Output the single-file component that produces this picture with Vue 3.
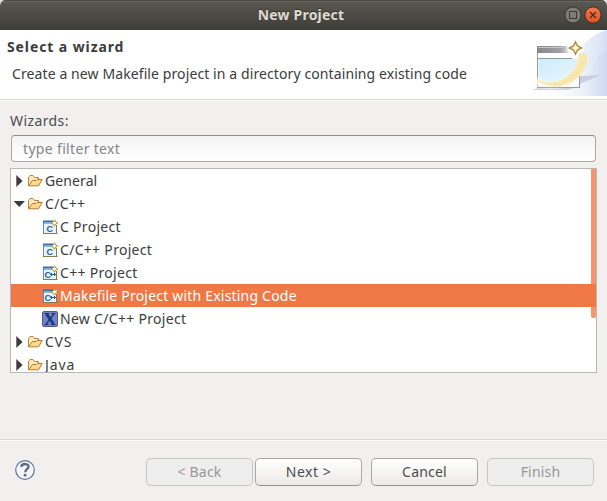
<script setup>
const rows = [
  { label: 'General', kind: 'folder', cls: 't-general' },
  { label: 'C/C++', kind: 'folder', open: true, cls: 't-cc' },
  { label: 'C Project', kind: 'new', glyph: 'C', child: true, cls: 't-c' },
  { label: 'C/C++ Project', kind: 'new', glyph: 'C', child: true, cls: 't-ccp' },
  { label: 'C++ Project', kind: 'new', glyph: 'C++', child: true, cls: 't-cpp' },
  { label: 'Makefile Project with Existing Code', kind: 'new', glyph: 'C++', child: true, selected: true, cls: 't-make' },
  { label: 'New C/C++ Project', kind: 'x', child: true, cls: 't-new' },
  { label: 'CVS', kind: 'folder', cls: 't-cvs' },
  { label: 'Java', kind: 'folder', cls: 't-java' },
]
const buttons = [
  { label: '< Back', disabled: true, cls: 'back' },
  { label: 'Next >', cls: 'next' },
  { label: 'Cancel', cls: 'cancel' },
  { label: 'Finish', disabled: true, cls: 'finish' },
]
</script>

<template>
  <div class="window">
    <div class="titlebar">
      <span class="title">New Project</span>
      <div class="controls">
        <svg width="18" height="18" viewBox="0 0 18 18">
          <circle cx="9" cy="9" r="8.1" fill="#7c7b74" stroke="#35342f" />
          <rect x="5.5" y="5.5" width="7" height="7" fill="none" stroke="#3b3a35" />
        </svg>
        <svg width="18" height="18" viewBox="0 0 18 18">
          <defs>
            <linearGradient id="close" x2="0" y2="1">
              <stop stop-color="#f4794d" /><stop offset="1" stop-color="#e3521f" />
            </linearGradient>
          </defs>
          <circle cx="9" cy="9" r="8.1" fill="url(#close)" stroke="#38332e" />
          <path d="M6 6l6 6M12 6l-6 6" stroke="#4a2a1c" stroke-width="1.3" />
        </svg>
      </div>
    </div>

    <header class="header">
      <div class="header-text">
        <h1>Select a wizard</h1>
        <p>Create a new Makefile project in a directory containing existing code</p>
      </div>
      <svg class="banner" width="75" height="66" viewBox="532 30 75 66">
        <defs>
          <linearGradient id="sweep" x1="0" x2="1">
            <stop stop-color="#f5f7fd" /><stop offset="1" stop-color="#cbd7f0" />
          </linearGradient>
          <linearGradient id="sweep2" x1="0" x2="1">
            <stop stop-color="#ffffff" stop-opacity="0" /><stop offset="1" stop-color="#d5dff4" />
          </linearGradient>
          <linearGradient id="bar" x1="0" x2="1">
            <stop stop-color="#85858a" /><stop offset=".55" stop-color="#a2a2a5" /><stop offset=".85" stop-color="#fff" />
          </linearGradient>
          <linearGradient id="pane" x2="1" y2="1">
            <stop stop-color="#cdecfb" /><stop offset=".6" stop-color="#dff3fe" /><stop offset="1" stop-color="#fff" />
          </linearGradient>
          <filter id="soft"><feGaussianBlur stdDeviation="1.2" /></filter>
          <filter id="haze"><feGaussianBlur stdDeviation=".6" /></filter>
        </defs>
        <path d="M532 96C565 91 568 41 607 30V96Z" fill="url(#sweep2)" />
        <path d="M577 96C596 85 586 59 607 51V96Z" fill="url(#sweep)" opacity=".7" />
        <path d="M580 76L601 75L580 84ZM532 90L541 87H578L567 90Z" fill="#c5c8df" filter="url(#haze)" opacity=".8" />
        <rect x="537.5" y="46.5" width="42" height="41" fill="#fff" stroke="#9799a2" />
        <rect x="537" y="46" width="43" height="7" fill="url(#bar)" />
        <path d="M538 47.5H564" stroke="#c5c5c8" />
        <rect x="538.5" y="58.5" width="40" height="28" fill="url(#pane)" />
        <path d="M538 58.5H572" stroke="#8c98a5" />
        <circle cx="575" cy="48" r="8" fill="#fff" filter="url(#soft)" />
        <path d="M535 80C547 91 580 86 583 57" fill="none" stroke="#fffbea" stroke-width="8" filter="url(#soft)" opacity=".8" />
        <path d="M534 78C543 84 556 84 565 78Q577 70 579 56Q580 52 584 53Q589 55 587 63C580 84 555 95 534 78Z" fill="#f8e8af" filter="url(#haze)" />
        <path d="M555 84Q577 81 583 60" fill="none" stroke="#edd894" stroke-width="1.2" stroke-dasharray="1 3" />
        <path d="M538 87.5H579.5V78" fill="none" stroke="#9799a2" opacity=".8" />
        <path d="M575.5 42L577.5 46L581.5 48L577.5 50L575.5 54L573.5 50L569.5 48L573.5 46Z" fill="#fff9dc" stroke="#b28c3d" stroke-width="1.5" />
      </svg>
    </header>

    <main class="content">
      <label class="wizards">Wizards:</label>
      <div class="filter"><span>type filter text</span></div>
      <div class="tree">
        <div v-for="row in rows" :key="row.label" class="row" :class="{ child: row.child, selected: row.selected }">
          <svg v-if="!row.child" class="arrow" width="13" height="14" viewBox="0 0 13 14">
            <path v-if="row.open" d="M.5 4H12L6.25 10Z" fill="#3c3c3c" />
            <path v-else d="M3.3 1L9.6 7L3.3 13Z" fill="#3c3c3c" />
          </svg>
          <svg v-if="row.kind === 'folder'" class="icon" width="16" height="16" viewBox="0 0 16 16">
            <path d="M1.5 12.5V4.5L3 2.5H6L7.5 4.5H11.5V7.5" fill="#fae9bd" stroke="#c08239" stroke-linejoin="round" />
            <path d="M1.5 12.8L5.5 7.5H9L10 6.5H15.2L11.5 12.8Z" fill="#f8d98e" stroke="#b47a34" stroke-linejoin="round" />
          </svg>
          <svg v-else-if="row.kind === 'new'" class="icon" width="16" height="16" viewBox="0 0 16 16">
            <rect x="1" y="2" width="14" height="13" fill="#e5f3fc" />
            <path d="M1.5 14.5V2" stroke="#5e8db4" />
            <path d="M1 14.5H15.5M14.5 15V6" stroke="#8b7a43" />
            <path d="M1 2.5H11" stroke="#2e71ab" stroke-width="2" />
            <path d="M2 4.5H10" stroke="#8bb6da" />
            <text :x="row.glyph === 'C' ? 4.5 : 2.5" y="12.5" class="glyph">C</text>
            <path v-if="row.glyph === 'C++'" d="M8 9.5H11M9.5 8V11M11 9.5H14M12.5 8V11" stroke="#255d91" />
            <path d="M12.5 .8L13.7 2.9L15.8 4L13.7 5.1L12.5 7.2L11.3 5.1L9.2 4L11.3 2.9Z" fill="#fff4bd" stroke="#b18b2b" />
            <path d="M12.5 2V6M10.5 4H14.5" stroke="#fffbe0" />
          </svg>
          <svg v-else class="icon" width="16" height="16" viewBox="0 0 16 16">
            <rect x=".5" y=".5" width="15" height="15" rx="1.5" fill="#7883bd" stroke="#4d5998" />
            <path d="M2.5 2.5H7M9.5 2.5H13.5M2.5 13.5H6.5M9 13.5H13.5" stroke="#173276" />
            <path d="M4.5 3L11.5 13" stroke="#173a87" stroke-width="3" />
            <path d="M11.8 3L4.2 13" stroke="#173a87" stroke-width="1.5" />
          </svg>
          <span class="label" :class="row.cls">{{ row.label }}</span>
        </div>
        <div class="scroll"></div>
      </div>
    </main>

    <footer class="footer">
      <svg class="help" width="20" height="20" viewBox="0 0 20 20">
        <circle cx="10" cy="10" r="9.3" fill="#f4f5f8" stroke="#657693" stroke-width="1.2" />
        <path d="M6.3 6.8C6.8 3 13.8 3.2 13.5 6.8C13.3 9.3 10.3 9.2 10.2 12.3" fill="none" stroke="#56678b" stroke-width="2.3" />
        <circle cx="10.1" cy="15.2" r="1.4" fill="#56678b" />
      </svg>
      <button v-for="b in buttons" :key="b.label" :class="b.cls" :disabled="b.disabled"><span>{{ b.label }}</span></button>
    </footer>
  </div>
</template>

<style>
body { margin: 0; background: #dfe0e2; }
</style>

<style scoped>
.window {
  width: 607px; height: 501px; overflow: hidden; box-sizing: border-box;
  display: flex; flex-direction: column; background: #f1f0ee; border-radius: 6px 6px 0 0;
  font: 14px/20px "Noto Sans", sans-serif; color: #3c3c3c;
}
span, p, label, h1 { white-space: nowrap; }
.titlebar {
  height: 30px; flex: none; display: grid; grid-template-columns: 1fr auto 1fr; align-items: center;
  background: linear-gradient(#5c5950, #3e3d38); box-shadow: inset 0 1px #4b4943, inset 0 2px #69665d;
}
.title { grid-column: 2; font-weight: 700; color: #dfdbd2; letter-spacing: .2px; padding-right: 5px; text-shadow: 0 -1px #35342f; }
.controls { display: flex; gap: 2px; justify-content: flex-end; padding-right: 5px; }
.header { height: 69px; flex: none; display: flex; justify-content: space-between; background: #fff; border-bottom: 1px solid #d9d9d8; box-shadow: 0 1px #fafafa; }
.header-text { padding: 7px 0 0 7px; }
h1 { margin: 0; font: 700 14px/20px "Noto Sans", sans-serif; letter-spacing: .9px; }
p { margin: 7px 0 0 5px; letter-spacing: .1px; }
.content { height: 340px; flex: none; padding: 11px 10px 0; box-sizing: border-box; border-bottom: 1px solid #d8d8d7; box-shadow: 0 1px #fbfbfb; }
.wizards { display: block; height: 24px; color: #4c4c4c; letter-spacing: .4px; }
.filter {
  height: 27px; margin: 0 1px 6px 1px; padding: 1px 11px; box-sizing: border-box; border: 1px solid #aaa9a7; border-top-color: #8d8d8b;
  border-radius: 4px; background: linear-gradient(#f4f4f4, #fff); color: #858585; line-height: 23px; letter-spacing: .33px;
}
.tree { position: relative; height: 205px; box-sizing: border-box; border: 1px solid #b9b8b5; overflow: hidden; background: #fff; }
.row { height: 23px; display: flex; align-items: center; padding-left: 2px; }
.row.child { padding-left: 31px; }
.row.selected { position: relative; z-index: 1; background: #f07846; color: #fff; }
.arrow { flex: none; margin-right: 1px; }
.icon { flex: none; margin-right: 2px; }
.label { letter-spacing: .3px; }
.t-general { letter-spacing: .1px; }
.t-make { letter-spacing: .2px; }
.t-cvs { letter-spacing: .7px; }
.t-java { letter-spacing: .9px; }
.glyph { font: 700 9px "Liberation Sans", sans-serif; fill: #255d91; }
.scroll { position: absolute; right: 0; top: 0; width: 5px; height: 149px; background: #f59570; border-radius: 0 0 2px 2px; }
.footer { flex: 1; display: flex; align-items: flex-start; padding: 18px 13px 0 15px; }
.help { margin: 2px 111px 0 0; }
button {
  width: 107px; height: 28px; padding: 0; box-sizing: border-box; border: 1px solid #aaa9a7; border-bottom-color: #929190; border-radius: 5px;
  background: linear-gradient(#fff, #ebeae8); font: inherit; color: #4c4c4c; letter-spacing: .2px;
}
button:disabled { background: #eee; border-color: #c6c6c5; color: #989795; }
.next { margin-left: 2px; letter-spacing: .5px; }
.cancel, .finish { margin-left: 9px; }
</style>
